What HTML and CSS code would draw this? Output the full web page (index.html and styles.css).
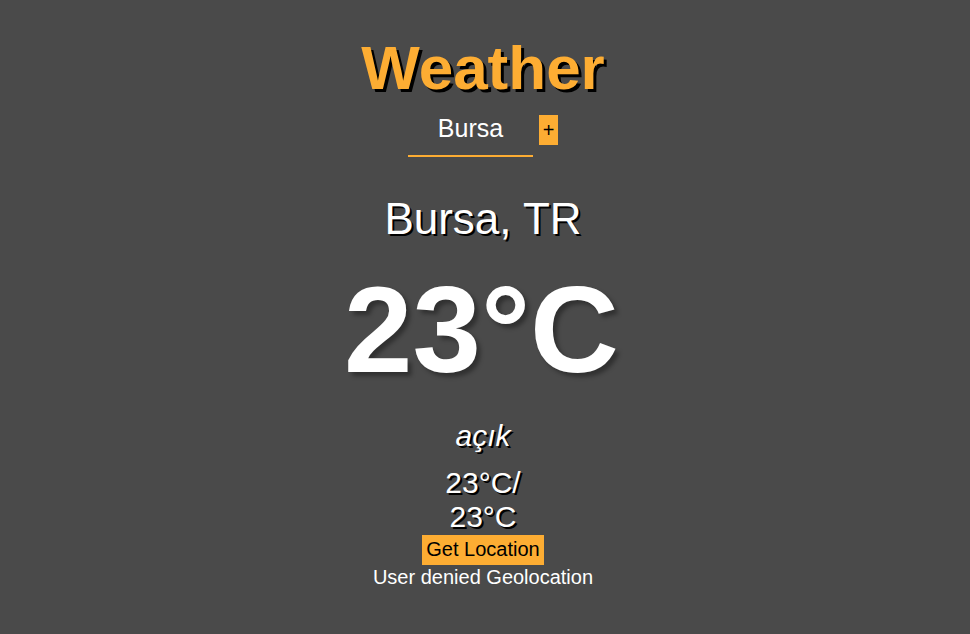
FILE: index.html
```html
<!DOCTYPE html>
<html lang="tr">
<head>
<meta charset="utf-8">
<title>Weather</title>
<link rel="stylesheet" href="styles.css">
</head>
<body>
<main class="app">
  <h1 class="title">Weather</h1>
  <form class="search">
    <input class="search-input" type="text" value="Bursa">
    <button class="add" type="button">+</button>
  </form>
  <h2 class="city">Bursa, TR</h2>
  <div class="temp">23°C</div>
  <div class="desc">açık</div>
  <div class="range">23°C/ 23°C</div>
  <button class="locate" type="button">Get Location</button>
  <div class="status">User denied Geolocation</div>
</main>
</body>
</html>
```

FILE: styles.css
```css
html, body {
  margin: 0;
  padding: 0;
  background: #4a4a4a;
}

body {
  font-family: "Liberation Sans", Arial, sans-serif;
  color: #ffffff;
}

.app {
  display: flex;
  flex-direction: column;
  align-items: center;
  text-align: center;
  padding: 32px 4px 0 0;
}

.title {
  margin: 0;
  font-size: 62px;
  font-weight: bold;
  line-height: normal;
  color: #fdad33;
  text-shadow: 3px 3px 0 #000;
}

.search {
  display: flex;
  align-items: flex-start;
  margin: 12px 0 0;
}

.search-input {
  box-sizing: border-box;
  width: 125px;
  height: 42px;
  padding: 0 0 13px;
  margin: 0;
  border: none;
  border-bottom: 2px solid #fdad33;
  background: transparent;
  color: #ffffff;
  font-family: "Liberation Sans", Arial, sans-serif;
  font-size: 25px;
  line-height: normal;
  text-align: center;
  outline: none;
}

.add {
  box-sizing: border-box;
  width: 19px;
  height: 30px;
  margin-left: 6px;
  padding: 0;
  border: none;
  background: #fdad33;
  color: #000;
  font-family: "Liberation Sans", Arial, sans-serif;
  font-size: 20px;
  line-height: 30px;
}

.city {
  margin: 37px 0 0;
  font-size: 44px;
  font-weight: normal;
  line-height: normal;
  text-shadow: 2px 2px 0 #000;
}

.temp {
  margin: 15px 3px 0 0;
  font-size: 123px;
  font-weight: bold;
  line-height: normal;
  text-shadow: 4px 4px 4px rgba(0, 0, 0, 0.35);
}

.desc {
  margin-top: 19px;
  font-size: 30px;
  font-style: italic;
  line-height: normal;
  text-shadow: 2px 2px 0 #000;
}

.range {
  max-width: 100px;
  margin-top: 13px;
  font-size: 30px;
  line-height: normal;
  text-shadow: 2px 2px 0 #000;
}

.locate {
  margin-top: 1px;
  padding: 3px 4px 4px;
  border: none;
  background: #fdad33;
  color: #000;
  font-family: "Liberation Sans", Arial, sans-serif;
  font-size: 20px;
  line-height: normal;
}

.status {
  margin-top: 1px;
  font-size: 20px;
  line-height: normal;
}
```
